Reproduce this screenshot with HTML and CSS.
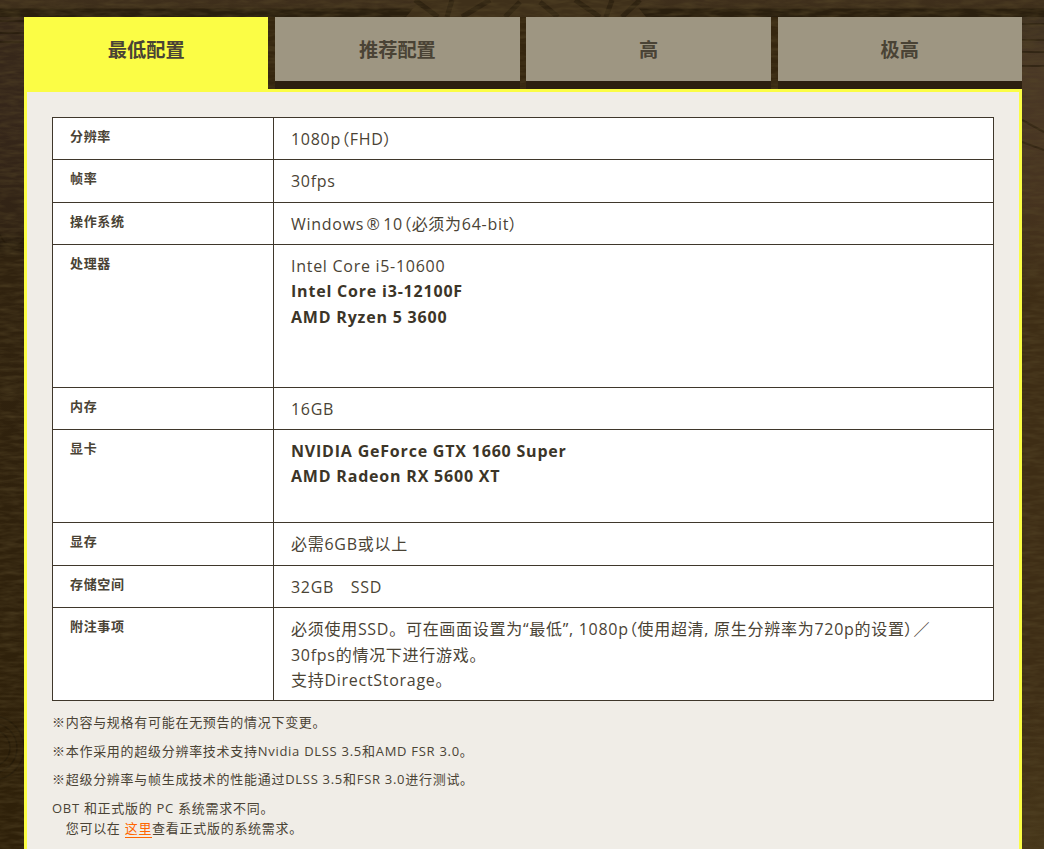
FILE: index.html
```html
<!DOCTYPE html>
<html lang="zh-CN">
<head>
<meta charset="utf-8">
<title>系统需求</title>
<link rel="stylesheet" href="styles.css">
</head>
<body>
<svg class="backdrop" width="1044" height="849" viewBox="0 0 1044 849" aria-hidden="true">
  <defs>
    <filter id="grain" x="0" y="0" width="100%" height="100%">
      <feTurbulence type="fractalNoise" baseFrequency="0.05 0.25" numOctaves="3" seed="7"/>
      <feColorMatrix values="0 0 0 0 0.09  0 0 0 0 0.06  0 0 0 0 0.02  0 0 0 1.1 -0.4"/>
    </filter>
  </defs>
  <path d="M406 17 L420 0 H632 L646 17 Z" fill="#3f301a"/>
  <g fill="none" stroke="#2f2311" stroke-width="5">
    <path d="M415 0 L438 17M452 0 L447 17M462 17 L490 0M505 17 L520 2M540 2 L558 17M575 0 L600 17M612 0 L606 17M640 0 L622 17"/>
  </g>
  <g fill="none" stroke="#1f1606" stroke-width="1.5" opacity=".6">
    <circle cx="-8" cy="748" r="18"/>
    <circle cx="-8" cy="748" r="25"/>
    <circle cx="-8" cy="748" r="32"/>
    <path d="M0 235 C8 250 16 252 24 238"/>
  </g>
  <g stroke="#1f1606" stroke-width="2" opacity=".5">
    <path d="M0 21H24M0 33H24M0 42H24M1022 24H1044M1022 40H1044M1022 52H1044M1022 66H1044"/>
    <path d="M1022 120L1044 132M1022 142L1044 150"/>
  </g>
  <rect width="1044" height="849" filter="url(#grain)"/>
</svg>
<main class="wrap">
  <nav class="tabs">
    <a class="tab is-active">最低配置</a>
    <a class="tab">推荐配置</a>
    <a class="tab">高</a>
    <a class="tab">极高</a>
  </nav>
  <section class="panel">
    <table class="spec">
      <tbody>
        <tr><th>分辨率</th><td>1080p<span class="trim">（</span>FHD<span class="trim">）</span></td></tr>
        <tr><th>帧率</th><td>30fps</td></tr>
        <tr><th>操作系统</th><td>Windows<span class="reg">®</span>10<span class="trim">（</span>必须为64-bit<span class="trim">）</span></td></tr>
        <tr><th>处理器</th><td>Intel Core i5-10600<br><b>Intel Core i3-12100F</b><br><b>AMD Ryzen 5 3600</b><br><br><br></td></tr>
        <tr class="row-short"><th>内存</th><td>16GB</td></tr>
        <tr><th>显卡</th><td><b>NVIDIA GeForce GTX 1660 Super</b><br><b>AMD Radeon RX 5600 XT</b><br><br></td></tr>
        <tr class="row-long"><th>显存</th><td>必需6GB或以上</td></tr>
        <tr><th>存储空间</th><td>32GB　SSD</td></tr>
        <tr><th>附注事项</th><td>必须使用SSD。可在画面设置为“最低”, 1080p<span class="trim">（</span>使用超清, 原生分辨率为720p的设置<span class="trim">）</span>／<br>30fps的情况下进行游戏。<br>支持DirectStorage。</td></tr>
      </tbody>
    </table>
    <p class="note">※内容与规格有可能在无预告的情况下变更。</p>
    <p class="note">※本作采用的超级分辨率技术支持Nvidia DLSS 3.5和AMD FSR 3.0。</p>
    <p class="note">※超级分辨率与帧生成技术的性能通过DLSS 3.5和FSR 3.0进行测试。</p>
    <p class="note">OBT 和正式版的 PC 系统需求不同。<br>　您可以在 <a class="link">这里</a>查看正式版的系统需求。</p>
  </section>
</main>
</body>
</html>
```

FILE: styles.css
```css
* { box-sizing: border-box; }

html, body { margin: 0; padding: 0; height: 100%; }

body {
  position: relative;
  overflow: hidden;
  color: #4a4335;
  font-family: "Open Sans", "Noto Sans CJK SC", sans-serif;
  background-color: #35260f;
  background-image:
    linear-gradient(to bottom, #3f2f1c 0, #3d2e1a 8px, #2a1f0e 9px, #2a1f0e 17px, transparent 17px),
    linear-gradient(to bottom, #37281a 17px, #35261a 120px, #312314 230px, #261b0c 245px, #30220f 260px, #2e2009 849px),
    linear-gradient(to bottom, #3d3020 17px, #4a3826 70px, #46331f 200px, #3e2d15 300px, #3e2d15 700px, #463619 849px);
  background-size: 100% 17px, 24px 100%, 22px 100%;
  background-position: 0 0, 0 0, 100% 0;
  background-repeat: no-repeat;
}

.backdrop {
  position: absolute;
  top: 0;
  left: 0;
}

.wrap {
  position: relative;
  width: 998px;
  height: 100%;
  margin-left: 24px;
  padding-top: 17px;
  display: flex;
  flex-direction: column;
}

.tabs {
  display: grid;
  grid-template-columns: repeat(4, 1fr);
  column-gap: 6.75px;
}

.tab {
  display: flex;
  align-items: center;
  justify-content: center;
  height: 72px;
  font-size: 19.2px;
  font-weight: 700;
  background-color: #9e9682;
  background-clip: padding-box;
  border-bottom: 8px solid #2d2010;
}

.tab.is-active {
  background-color: #fbfd45;
  border-bottom-color: #fbfd45;
}

.panel {
  flex: 1;
  background: #f0ede7;
  border: 3px solid #fbfd45;
  border-bottom: 0;
  padding: 25px 25px 0;
}

.spec {
  width: 100%;
  border-collapse: collapse;
  background: #fff;
  color: #4a4335;
  font-size: 16px;
  letter-spacing: .045em;
  line-height: 25.2px;
}

.spec b {
  font-weight: 700;
  color: #3c3528;
  letter-spacing: .05em;
}

.trim { font-feature-settings: "palt"; }

.reg { padding: 0 2.5px; }

.spec th, .spec td {
  border: 1px solid #3f372b;
  text-align: left;
  vertical-align: top;
}

.spec th {
  width: 221px;
  padding: 9px 17px 0;
  font-size: 13px;
  letter-spacing: .05em;
  line-height: 19.5px;
  font-weight: 700;
}

.spec td {
  padding: 9px 17px 7.2px;
}

.spec .row-short td { padding-bottom: 6.7px; }

.spec .row-long td { padding-bottom: 7.7px; }

.note {
  margin: 11px 0 0;
  font-size: 13px;
  line-height: 20px;
  letter-spacing: .055em;
}

.note + .note { margin-top: 8.5px; }

.link {
  color: #ff6600;
  border-bottom: 1px solid #ff6600;
}
```
